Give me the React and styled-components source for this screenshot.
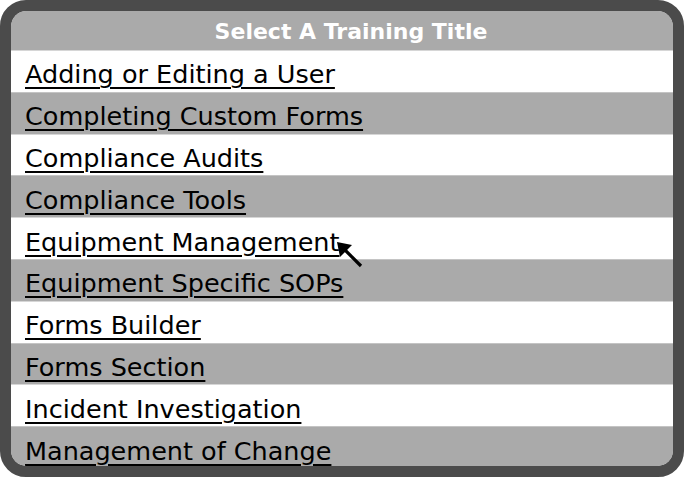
import styled, { createGlobalStyle } from "styled-components";

const GlobalStyle = createGlobalStyle`
  html, body {
    margin: 0;
    padding: 0;
    background: #fff;
    overflow: hidden;
  }
  body {
    font-family: "DejaVu Sans", Verdana, sans-serif;
  }
`;

const titles = [
  "Adding or Editing a User",
  "Completing Custom Forms",
  "Compliance Audits",
  "Compliance Tools",
  "Equipment Management",
  "Equipment Specific SOPs",
  "Forms Builder",
  "Forms Section",
  "Incident Investigation",
  "Management of Change",
];

const App = () => {
  return (
    <>
      <GlobalStyle />
      <Frame>
        <Inner>
          <Header>Select A Training Title</Header>
          {titles.map((title, i) => (
            <Row key={title} $shaded={i % 2 === 1}>
              <TitleLink href="#">{title}</TitleLink>
              {title === "Equipment Management" && (
                <Pointer viewBox="0 0 28 28" width="28" height="28">
                  <polygon points="1,1 16,4 4,16" fill="#000" />
                  <line x1="8" y1="8" x2="25" y2="25" stroke="#000" strokeWidth="3.2" />
                </Pointer>
              )}
            </Row>
          ))}
        </Inner>
      </Frame>
      <NextRow>
        <TitleLink href="#">Machine Guarding</TitleLink>
      </NextRow>
    </>
  );
};

const Frame = styled.div`
  box-sizing: border-box;
  width: 684px;
  height: 477px;
  border: 11px solid #4b4b4b;
  border-radius: 26px;
  background: #4b4b4b;
  overflow: hidden;
`;

const Inner = styled.div`
  height: 100%;
  border-radius: 15px;
  overflow: hidden;
  background: #aaaaaa;
  box-shadow: inset 0 0 0 1px #c2c2c2;
  display: flex;
  flex-direction: column;
`;

const Header = styled.div`
  flex: 0 0 39px;
  display: flex;
  align-items: center;
  justify-content: center;
  padding-left: 18px;
  padding-top: 2px;
  box-sizing: border-box;
  background: #aaaaaa;
  color: #fff;
  font-weight: bold;
  font-size: 22px;
`;

const Row = styled.div`
  position: relative;
  flex: 0 0 41.8px;
  box-sizing: border-box;
  display: flex;
  align-items: center;
  padding: 6px 0 0 14px;
  background: ${(p) => (p.$shaded ? "#aaaaaa" : "#ffffff")};
  border-top: 1px solid ${(p) => (p.$shaded ? "#c4c4c4" : "#d6d6d6")};
`;

const TitleLink = styled.a`
  color: #000;
  font-size: 25.5px;
  text-decoration: underline;
  text-decoration-thickness: 2px;
  text-underline-offset: 4px;
`;

const Pointer = styled.svg`
  position: absolute;
  z-index: 1;
  left: 325px;
  top: 23px;
`;

const NextRow = styled.div`
  padding: 3px 0 0 25px;
  line-height: 22px;
`;

export default App;
